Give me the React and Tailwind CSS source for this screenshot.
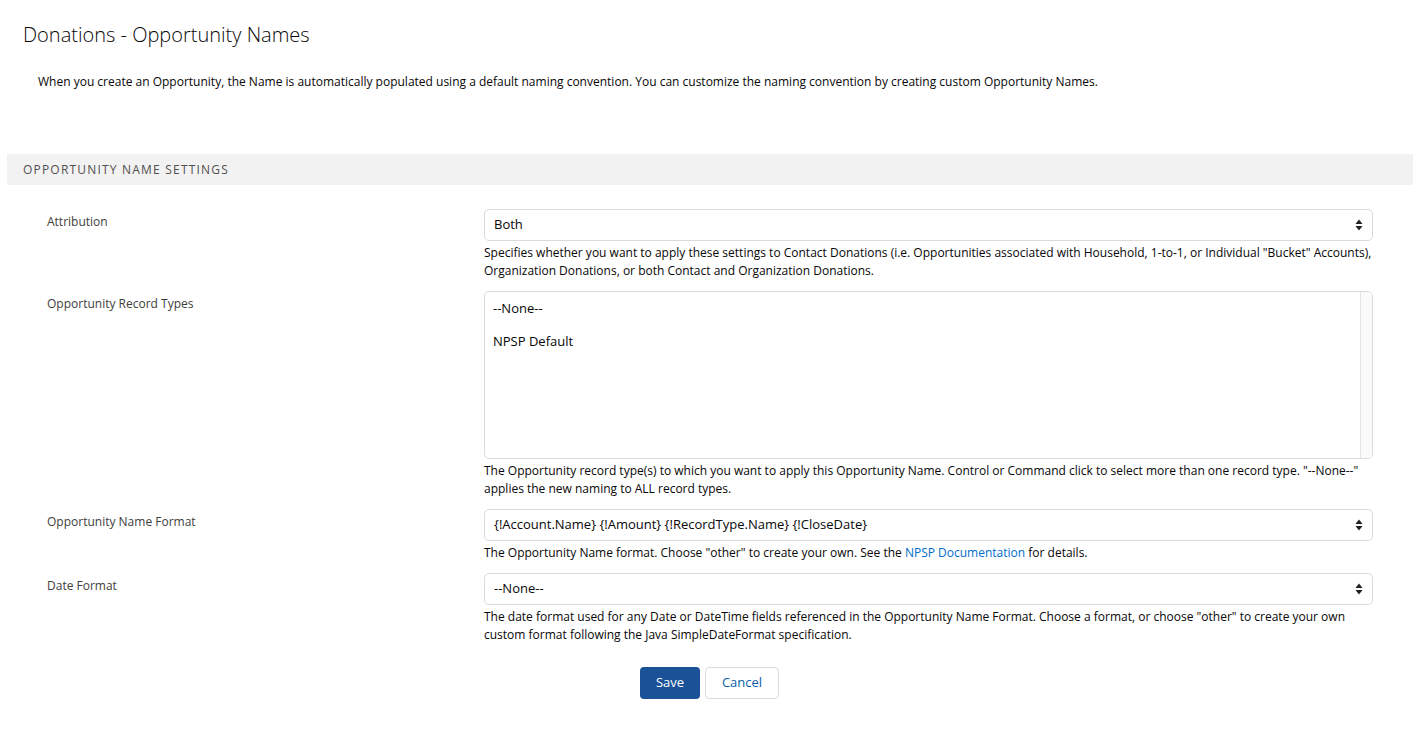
const font = { fontFamily: '"Open Sans", "Liberation Sans", sans-serif' };

function Arrows() {
  return (
    <svg width="8" height="12" viewBox="0 0 8 12" className="shrink-0">
      <path d="M4 0.5 L7.5 5 H0.5 Z" fill="#222" />
      <path d="M4 11.5 L7.5 7 H0.5 Z" fill="#222" />
    </svg>
  );
}

function Select({ value }) {
  return (
    <div className="flex h-[32px] items-center justify-between rounded-[5px] border border-[#dddbda] bg-white pl-[9px] pr-[9px] text-[13px] text-[#080707]">
      <span>{value}</span>
      <Arrows />
    </div>
  );
}

function Help({ children }) {
  return <p className="mt-[3px] text-[12px] leading-[18px] text-[#080707]">{children}</p>;
}

function Row({ label, children, className = "" }) {
  return (
    <div className={`flex ${className}`}>
      <div className="w-[437px] shrink-0 pt-[4px] text-[12px] leading-[18px] text-[#3e3e3c]">{label}</div>
      <div className="w-[889px]">{children}</div>
    </div>
  );
}

export default function App() {
  return (
    <div className="min-h-screen bg-white text-[#080707]" style={font}>
      <h1 className="pl-[23px] pt-[22px] text-[20px] font-light leading-[26px] text-[#080707]">
        Donations - Opportunity Names
      </h1>
      <p className="pl-[38px] pt-[25px] text-[12px] leading-[18px]">
        When you create an Opportunity, the Name is automatically populated using a default naming convention. You can customize the naming convention by creating custom Opportunity Names.
      </p>

      <div className="ml-[7px] mr-[10px] mt-[63px] flex h-[31px] items-center bg-[#f3f2f2] pl-[16px] text-[12px] uppercase tracking-[0.1em] text-[#514f4d]">
        Opportunity Name Settings
      </div>

      <div className="pl-[47px] pt-[24px]">
        <Row label="Attribution">
          <Select value="Both" />
          <Help>
            Specifies whether you want to apply these settings to Contact Donations (i.e. Opportunities associated with Household, 1-to-1, or Individual "Bucket" Accounts), Organization Donations, or both Contact and Organization Donations.
          </Help>
        </Row>

        <Row label="Opportunity Record Types" className="mt-[11px]">
          <div className="flex h-[168px] overflow-hidden rounded-[5px] border border-[#dddbda] bg-white text-[13px]">
            <div className="flex-1 pl-[8px] pt-[7px]">
              <div className="leading-[18px]">--None--</div>
              <div className="mt-[15px] leading-[18px]">NPSP Default</div>
            </div>
            <div className="w-[12px] border-l border-[#e5e5e5] bg-[#fafafa]" />
          </div>
          <Help>
            The Opportunity record type(s) to which you want to apply this Opportunity Name. Control or Command click to select more than one record type. "--None--" applies the new naming to ALL record types.
          </Help>
        </Row>

        <Row label="Opportunity Name Format" className="mt-[11px]">
          <Select value="{!Account.Name} {!Amount} {!RecordType.Name} {!CloseDate}" />
          <Help>
            The Opportunity Name format. Choose "other" to create your own. See the{" "}
            <a className="text-[#006dcc]">NPSP Documentation</a> for details.
          </Help>
        </Row>

        <Row label="Date Format" className="mt-[11px]">
          <Select value="--None--" />
          <Help>
            The date format used for any Date or DateTime fields referenced in the Opportunity Name Format. Choose a format, or choose "other" to create your own custom format following the Java SimpleDateFormat specification.
          </Help>
        </Row>
      </div>

      <div className="mt-[23px] flex justify-center gap-[5px] pr-[4px]">
        <button className="h-[32px] w-[60px] rounded-[4px] bg-[#1b5297] text-[13px] text-white">Save</button>
        <button className="h-[32px] w-[74px] rounded-[4px] border border-[#dddbda] bg-white text-[13px] text-[#0a5ea8]">Cancel</button>
      </div>
    </div>
  );
}
